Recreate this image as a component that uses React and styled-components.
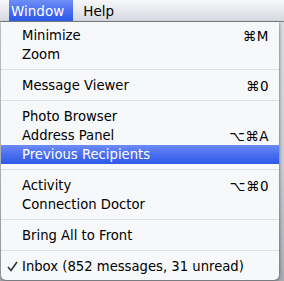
import styled, { createGlobalStyle } from 'styled-components';

const GlobalStyle = createGlobalStyle`
    html, body {
        margin: 0;
        padding: 0;
        background: #cdd1d7;
    }
    body {
        font-family: "DejaVu Sans", "Liberation Sans", sans-serif;
        -webkit-font-smoothing: antialiased;
    }
`

const Screen = styled.div`
    width: 284px;
    height: 281px;
    overflow: hidden;
    background: linear-gradient(to bottom, #dde0e5 0%, #c9cdd3 60%, #a9adb3 100%);
`
const MenuBar = styled.div`
    display: flex;
    align-items: stretch;
    height: 21px;
    padding-left: 9px;
    border-bottom: 1px solid #7d828a;
    background: linear-gradient(to bottom, #f6f7f9 0%, #e6e9ee 50%, #d3d8df 100%);
`
const MenuTitle = styled.div`
    display: flex;
    align-items: center;
    padding: ${ ( { $active } ) => $active ? '0 9px 0 2px' : '0 10px' };
    font-size: 13.5px;
    color: ${ ( { $active } ) => $active ? '#fff' : '#000' };
    background: ${ ( { $active } ) => $active
        ? 'linear-gradient(to bottom, #6f8ef6 0%, #4a6ff0 50%, #2c58e8 100%)'
        : 'transparent' };
`
const Menu = styled.div`
    width: 278px;
    margin-left: 1px;
    padding: 4px 0;
    background: #f7f8fa;
    border-radius: 0 0 5px 5px;
    box-shadow: 0 2px 4px rgba(0, 0, 0, 0.35), 1px 0 2px rgba(0, 0, 0, 0.15);
`
const Item = styled.div`
    display: flex;
    align-items: center;
    height: 19px;
    padding-right: 10px;
    font-size: 13.2px;
    color: ${ ( { $selected } ) => $selected ? '#fff' : '#000' };
    background: ${ ( { $selected } ) => $selected
        ? 'linear-gradient(to bottom, #6d8cf5 0%, #4a6ef0 50%, #2d59e9 100%)'
        : 'transparent' };
`
const Gutter = styled.span`
    flex: 0 0 21px;
    display: flex;
    align-items: center;
    justify-content: center;
    padding-left: 2px;
    box-sizing: border-box;
`
const Label = styled.span`
    flex: 1;
    white-space: nowrap;
`
const Shortcut = styled.span`
    white-space: nowrap;
    letter-spacing: 0.5px;
    font-size: 13.5px;
`
const Separator = styled.div`
    height: 1px;
    margin: 5px 0 6px;
    background: #e0e1e3;
`

const CheckMark = () => (
    <svg width="11" height="11" viewBox="0 0 11 11">
        <path d="M1 6 L4 9.5 L10 1" fill="none" stroke="#333" strokeWidth="1.6" />
    </svg>
)

const groups = [
    [ { label: 'Minimize', key: '⌘M' }, { label: 'Zoom' } ],
    [ { label: 'Message Viewer', key: '⌘0' } ],
    [ { label: 'Photo Browser' }, { label: 'Address Panel', key: '⌥⌘A' }, { label: 'Previous Recipients', selected: true } ],
    [ { label: 'Activity', key: '⌥⌘0' }, { label: 'Connection Doctor' } ],
    [ { label: 'Bring All to Front' } ],
    [ { label: 'Inbox (852 messages, 31 unread)', checked: true } ],
]

const App = () => {
    return (
        <>
            <GlobalStyle />
            <Screen>
                <MenuBar>
                    <MenuTitle $active>Window</MenuTitle>
                    <MenuTitle>Help</MenuTitle>
                </MenuBar>
                <Menu>
                    {groups.map( ( group, i ) => (
                        <div key={i}>
                            {i > 0 && <Separator />}
                            {group.map( item => (
                                <Item key={item.label} $selected={item.selected}>
                                    <Gutter>{item.checked && <CheckMark />}</Gutter>
                                    <Label>{item.label}</Label>
                                    {item.key && <Shortcut>{item.key}</Shortcut>}
                                </Item>
                            ) )}
                        </div>
                    ) )}
                </Menu>
            </Screen>
        </>
    )
}
export default App;
